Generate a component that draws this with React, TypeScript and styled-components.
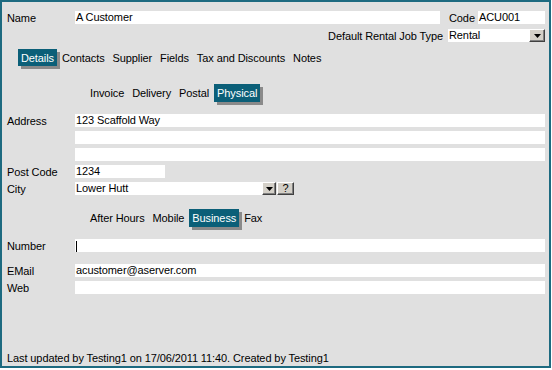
import React from "react";
import styled, { createGlobalStyle } from "styled-components";

const GlobalStyle = createGlobalStyle`
  html, body {
    margin: 0;
    padding: 0;
    background: #fff;
  }
  body {
    font-family: "Liberation Sans", Arial, sans-serif;
    font-size: 11px;
    letter-spacing: -0.1px;
    color: #000;
  }
`;

const Frame = styled.div`
  width: 551px;
  height: 368px;
  box-sizing: border-box;
  border: 2px solid #1d6a80;
  background: #e0e0e0;
  padding: 9px 4px 0 5px;
  display: flex;
  flex-direction: column;
`;

const Row = styled.div<{ $top?: number; $right?: boolean }>`
  display: flex;
  align-items: center;
  height: 13px;
  margin-top: ${(p) => p.$top ?? 0}px;
  justify-content: ${(p) => (p.$right ? "flex-end" : "flex-start")};
`;

const Label = styled.span<{ $w?: number }>`
  width: ${(p) => (p.$w ? `${p.$w}px` : "68px")};
  flex-shrink: 0;
  white-space: nowrap;
`;

const RightLabel = styled.span`
  white-space: nowrap;
  margin-right: 5px;
`;

const Field = styled.div<{ $w?: number; $gap?: number }>`
  position: relative;
  height: 13px;
  line-height: 13px;
  background: #fff;
  padding-left: 1px;
  box-sizing: border-box;
  white-space: nowrap;
  overflow: hidden;
  margin-right: ${(p) => p.$gap ?? 0}px;
  ${(p) => (p.$w ? `width: ${p.$w}px; flex-shrink: 0;` : "flex: 1;")}
`;

const Caret = styled.span`
  display: inline-block;
  width: 1px;
  height: 11px;
  background: #000;
  vertical-align: middle;
`;

const BevelButton = styled.div<{ $w: number; $gap?: number }>`
  width: ${(p) => p.$w}px;
  height: 13px;
  box-sizing: border-box;
  flex-shrink: 0;
  margin-left: ${(p) => p.$gap ?? 0}px;
  background: #d4d0c8;
  border: 1px solid;
  border-color: #fff #404040 #404040 #fff;
  box-shadow: inset -1px -1px #808080;
  display: flex;
  align-items: center;
  justify-content: center;
  font-size: 11px;
  line-height: 11px;
`;

const ComboButton = styled(BevelButton)`
  position: absolute;
  right: 0;
  top: 0;
`;

const TabBar = styled.div<{ $indent: number; $top: number; $h: number }>`
  display: flex;
  gap: 2px;
  height: ${(p) => p.$h}px;
  margin-top: ${(p) => p.$top}px;
  padding-left: ${(p) => p.$indent}px;
`;

const Tab = styled.div<{ $active?: boolean }>`
  display: flex;
  align-items: center;
  padding: 0 3px;
  white-space: nowrap;
  background: ${(p) => (p.$active ? "#0b5f78" : "transparent")};
  color: ${(p) => (p.$active ? "#fff" : "#000")};
  box-shadow: ${(p) => (p.$active ? "3px 3px 0 #8a8a8a" : "none")};
`;

const Footer = styled.div`
  margin-top: auto;
  padding-bottom: 2px;
  white-space: nowrap;
`;

const Arrow = () => (
  <svg width="7" height="4" viewBox="0 0 7 4">
    <polygon points="0,0 7,0 3.5,4" fill="#000" />
  </svg>
);

const tabs = ["Details", "Contacts", "Supplier", "Fields", "Tax and Discounts", "Notes"];
const addressTabs = ["Invoice", "Delivery", "Postal", "Physical"];
const phoneTabs = ["After Hours", "Mobile", "Business", "Fax"];

export default function App() {
  return (
    <>
      <GlobalStyle />
      <Frame>
        <Row>
          <Label>Name</Label>
          <Field $gap={9}>A Customer</Field>
          <Label $w={29}>Code</Label>
          <Field $w={67}>ACU001</Field>
        </Row>
        <Row $top={5} $right>
          <RightLabel>Default Rental Job Type</RightLabel>
          <Field $w={97}>
            Rental
            <ComboButton $w={16}>
              <Arrow />
            </ComboButton>
          </Field>
        </Row>

        <TabBar $indent={11} $top={7} $h={17}>
          {tabs.map((t) => (
            <Tab key={t} $active={t === "Details"}>
              {t}
            </Tab>
          ))}
        </TabBar>

        <TabBar $indent={80} $top={18} $h={18}>
          {addressTabs.map((t) => (
            <Tab key={t} $active={t === "Physical"}>
              {t}
            </Tab>
          ))}
        </TabBar>

        <Row $top={12}>
          <Label>Address</Label>
          <Field>123 Scaffold Way</Field>
        </Row>
        <Row $top={4}>
          <Label />
          <Field />
        </Row>
        <Row $top={4}>
          <Label />
          <Field />
        </Row>
        <Row $top={4}>
          <Label>Post Code</Label>
          <Field $w={90}>1234</Field>
        </Row>
        <Row $top={4}>
          <Label>City</Label>
          <Field $w={187}>Lower Hutt</Field>
          <BevelButton $w={14}>
            <Arrow />
          </BevelButton>
          <BevelButton $w={17} $gap={1}>
            ?
          </BevelButton>
        </Row>

        <TabBar $indent={80} $top={14} $h={18}>
          {phoneTabs.map((t) => (
            <Tab key={t} $active={t === "Business"}>
              {t}
            </Tab>
          ))}
        </TabBar>

        <Row $top={12}>
          <Label>Number</Label>
          <Field>
            <Caret />
          </Field>
        </Row>
        <Row $top={12}>
          <Label>EMail</Label>
          <Field>acustomer@aserver.com</Field>
        </Row>
        <Row $top={4}>
          <Label>Web</Label>
          <Field />
        </Row>

        <Footer>Last updated by Testing1 on 17/06/2011 11:40. Created by Testing1</Footer>
      </Frame>
    </>
  );
}
